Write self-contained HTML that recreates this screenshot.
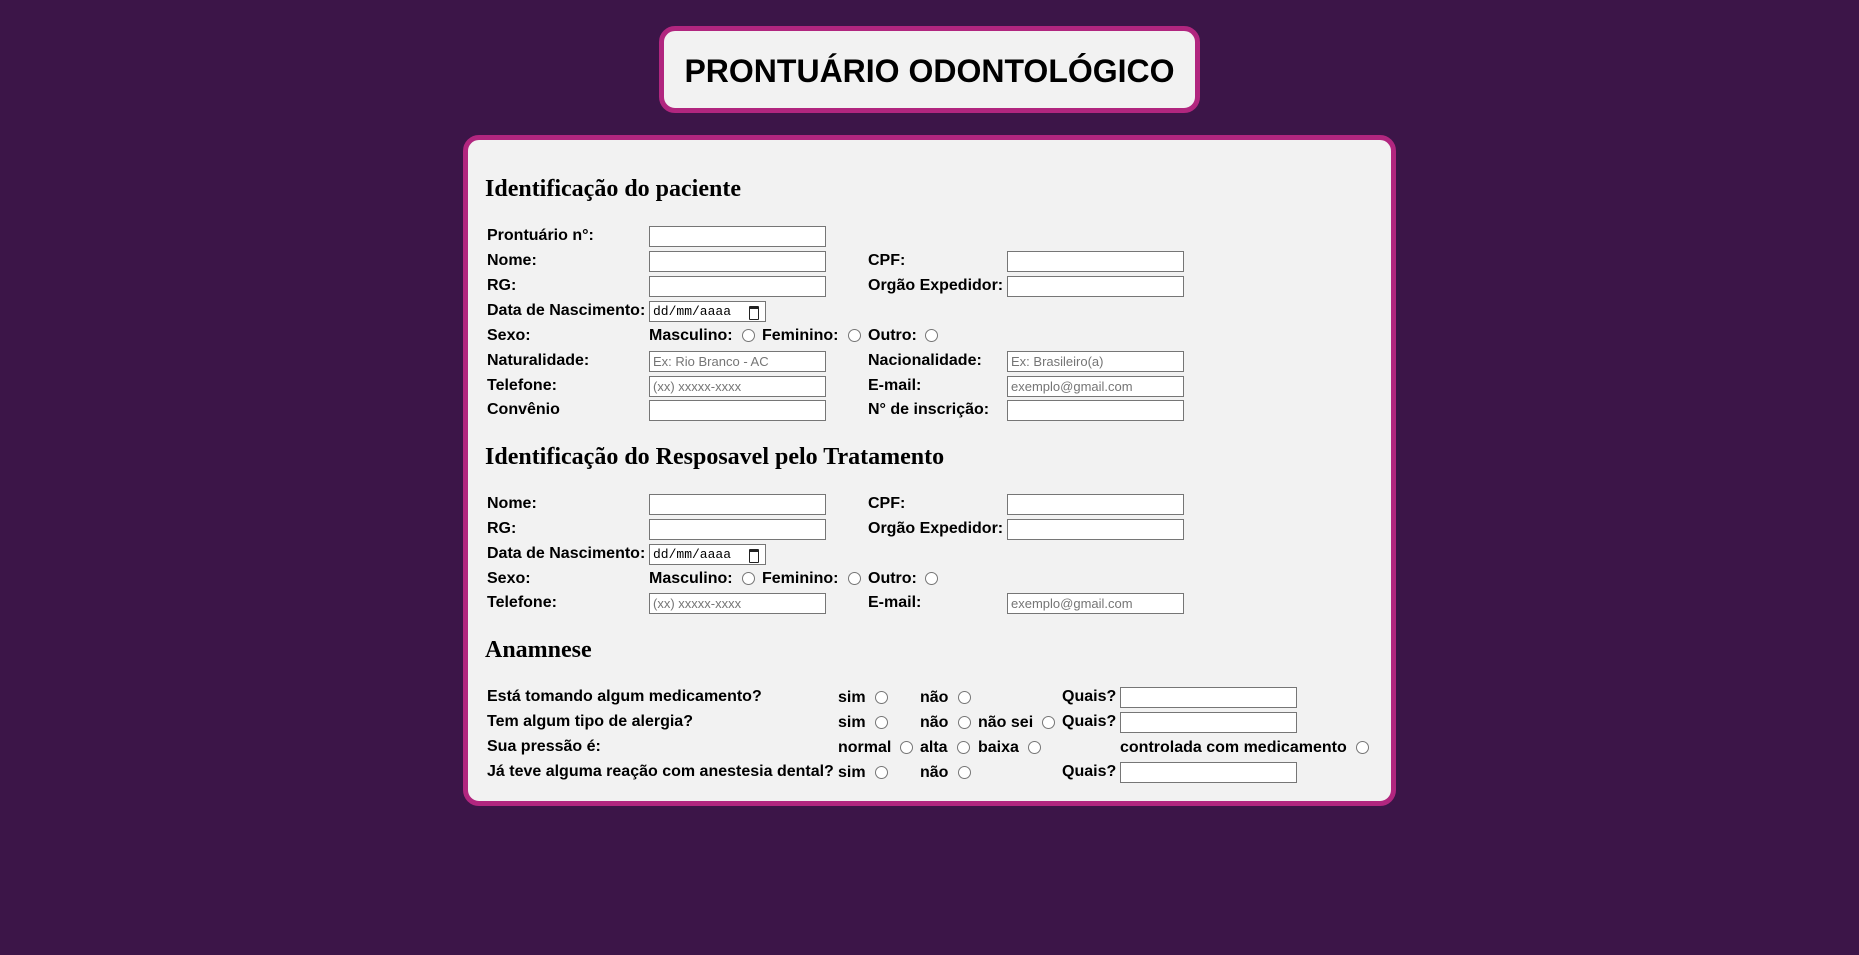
<!DOCTYPE html>
<html><head><meta charset="utf-8"><style>
*{box-sizing:border-box;margin:0;padding:0}
body{width:1859px;height:955px;background:#3c1548;font-family:"Liberation Sans",Arial,sans-serif;position:relative;overflow:hidden}
.tb{position:absolute;left:659px;top:26px;width:541px;height:87px;background:#f2f2f2;border:5px solid #b1267f;border-radius:16px}
.tb h1{position:absolute;left:0;right:0;top:22px;text-align:center;font-size:32px;font-weight:bold;line-height:36px;color:#000}
.mb{position:absolute;left:463px;top:135px;width:933px;height:671px;background:#f2f2f2;border:5px solid #b1267f;border-radius:16px}
.h{position:absolute;left:485px;font-family:"Liberation Serif","Times New Roman",serif;font-weight:bold;font-size:24px;line-height:28px;color:#000}
.l{position:absolute;font-size:16px;font-weight:bold;line-height:18px;color:#000;white-space:nowrap}
.i{position:absolute;width:177px;height:21px;background:#fff;border:1px solid #767676;font-size:13px;color:#757575;line-height:19px;padding-left:3px;white-space:nowrap}
.d{position:absolute;width:117px;height:21px;background:#fff;border:1px solid #767676;font-family:"Liberation Mono",monospace;font-size:13px;line-height:19px;padding-left:3px;color:#000}
.d:after{content:"";position:absolute;right:6px;top:4px;width:8px;height:10px;border:1.5px solid #222;border-top-width:3px;border-radius:1px}
.r{position:absolute;width:13px;height:13px;border:1px solid #767676;border-radius:50%;background:#fff}
</style></head><body>
<div class="tb"><h1>PRONTUÁRIO ODONTOLÓGICO</h1></div>
<div class="mb"></div>

<div class="h" style="top:175px">Identificação do paciente</div>
<div class="l" style="left:487px;top:227px">Prontuário n°:</div><div class="i" style="left:649px;top:226px"></div>
<div class="l" style="left:487px;top:252px">Nome:</div><div class="i" style="left:649px;top:251px"></div>
<div class="l" style="left:868px;top:252px">CPF:</div><div class="i" style="left:1007px;top:251px"></div>
<div class="l" style="left:487px;top:277px">RG:</div><div class="i" style="left:649px;top:276px"></div>
<div class="l" style="left:868px;top:277px">Orgão Expedidor:</div><div class="i" style="left:1007px;top:276px"></div>
<div class="l" style="left:487px;top:302px">Data de Nascimento:</div><div class="d" style="left:649px;top:301px">dd/mm/aaaa</div>
<div class="l" style="left:487px;top:327px">Sexo:</div>
<div class="l" style="left:649px;top:327px">Masculino:</div><div class="r" style="left:742px;top:329px"></div>
<div class="l" style="left:762px;top:327px">Feminino:</div><div class="r" style="left:848px;top:329px"></div>
<div class="l" style="left:868px;top:327px">Outro:</div><div class="r" style="left:925px;top:329px"></div>
<div class="l" style="left:487px;top:352px">Naturalidade:</div><div class="i" style="left:649px;top:351px">Ex: Rio Branco - AC</div>
<div class="l" style="left:868px;top:352px">Nacionalidade:</div><div class="i" style="left:1007px;top:351px">Ex: Brasileiro(a)</div>
<div class="l" style="left:487px;top:377px">Telefone:</div><div class="i" style="left:649px;top:376px">(xx) xxxxx-xxxx</div>
<div class="l" style="left:868px;top:377px">E-mail:</div><div class="i" style="left:1007px;top:376px">exemplo@gmail.com</div>
<div class="l" style="left:487px;top:401px">Convênio</div><div class="i" style="left:649px;top:400px"></div>
<div class="l" style="left:868px;top:401px">N° de inscrição:</div><div class="i" style="left:1007px;top:400px"></div>

<div class="h" style="top:443px">Identificação do Resposavel pelo Tratamento</div>
<div class="l" style="left:487px;top:495px">Nome:</div><div class="i" style="left:649px;top:494px"></div>
<div class="l" style="left:868px;top:495px">CPF:</div><div class="i" style="left:1007px;top:494px"></div>
<div class="l" style="left:487px;top:520px">RG:</div><div class="i" style="left:649px;top:519px"></div>
<div class="l" style="left:868px;top:520px">Orgão Expedidor:</div><div class="i" style="left:1007px;top:519px"></div>
<div class="l" style="left:487px;top:545px">Data de Nascimento:</div><div class="d" style="left:649px;top:544px">dd/mm/aaaa</div>
<div class="l" style="left:487px;top:570px">Sexo:</div>
<div class="l" style="left:649px;top:570px">Masculino:</div><div class="r" style="left:742px;top:572px"></div>
<div class="l" style="left:762px;top:570px">Feminino:</div><div class="r" style="left:848px;top:572px"></div>
<div class="l" style="left:868px;top:570px">Outro:</div><div class="r" style="left:925px;top:572px"></div>
<div class="l" style="left:487px;top:594px">Telefone:</div><div class="i" style="left:649px;top:593px">(xx) xxxxx-xxxx</div>
<div class="l" style="left:868px;top:594px">E-mail:</div><div class="i" style="left:1007px;top:593px">exemplo@gmail.com</div>

<div class="h" style="top:636px">Anamnese</div>
<div class="l" style="left:487px;top:688px">Está tomando algum medicamento?</div>
<div class="l" style="left:838px;top:689px">sim</div><div class="r" style="left:875px;top:691px"></div>
<div class="l" style="left:920px;top:689px">não</div><div class="r" style="left:958px;top:691px"></div>
<div class="l" style="left:1062px;top:688px">Quais?</div><div class="i" style="left:1120px;top:687px"></div>

<div class="l" style="left:487px;top:713px">Tem algum tipo de alergia?</div>
<div class="l" style="left:838px;top:714px">sim</div><div class="r" style="left:875px;top:716px"></div>
<div class="l" style="left:920px;top:714px">não</div><div class="r" style="left:958px;top:716px"></div>
<div class="l" style="left:978px;top:714px">não sei</div><div class="r" style="left:1042px;top:716px"></div>
<div class="l" style="left:1062px;top:713px">Quais?</div><div class="i" style="left:1120px;top:712px"></div>

<div class="l" style="left:487px;top:738px">Sua pressão é:</div>
<div class="l" style="left:838px;top:739px">normal</div><div class="r" style="left:900px;top:741px"></div>
<div class="l" style="left:920px;top:739px">alta</div><div class="r" style="left:957px;top:741px"></div>
<div class="l" style="left:978px;top:739px">baixa</div><div class="r" style="left:1028px;top:741px"></div>
<div class="l" style="left:1120px;top:739px">controlada com medicamento</div><div class="r" style="left:1356px;top:741px"></div>

<div class="l" style="left:487px;top:763px">Já teve alguma reação com anestesia dental?</div>
<div class="l" style="left:838px;top:764px">sim</div><div class="r" style="left:875px;top:766px"></div>
<div class="l" style="left:920px;top:764px">não</div><div class="r" style="left:958px;top:766px"></div>
<div class="l" style="left:1062px;top:763px">Quais?</div><div class="i" style="left:1120px;top:762px"></div>
</body></html>
